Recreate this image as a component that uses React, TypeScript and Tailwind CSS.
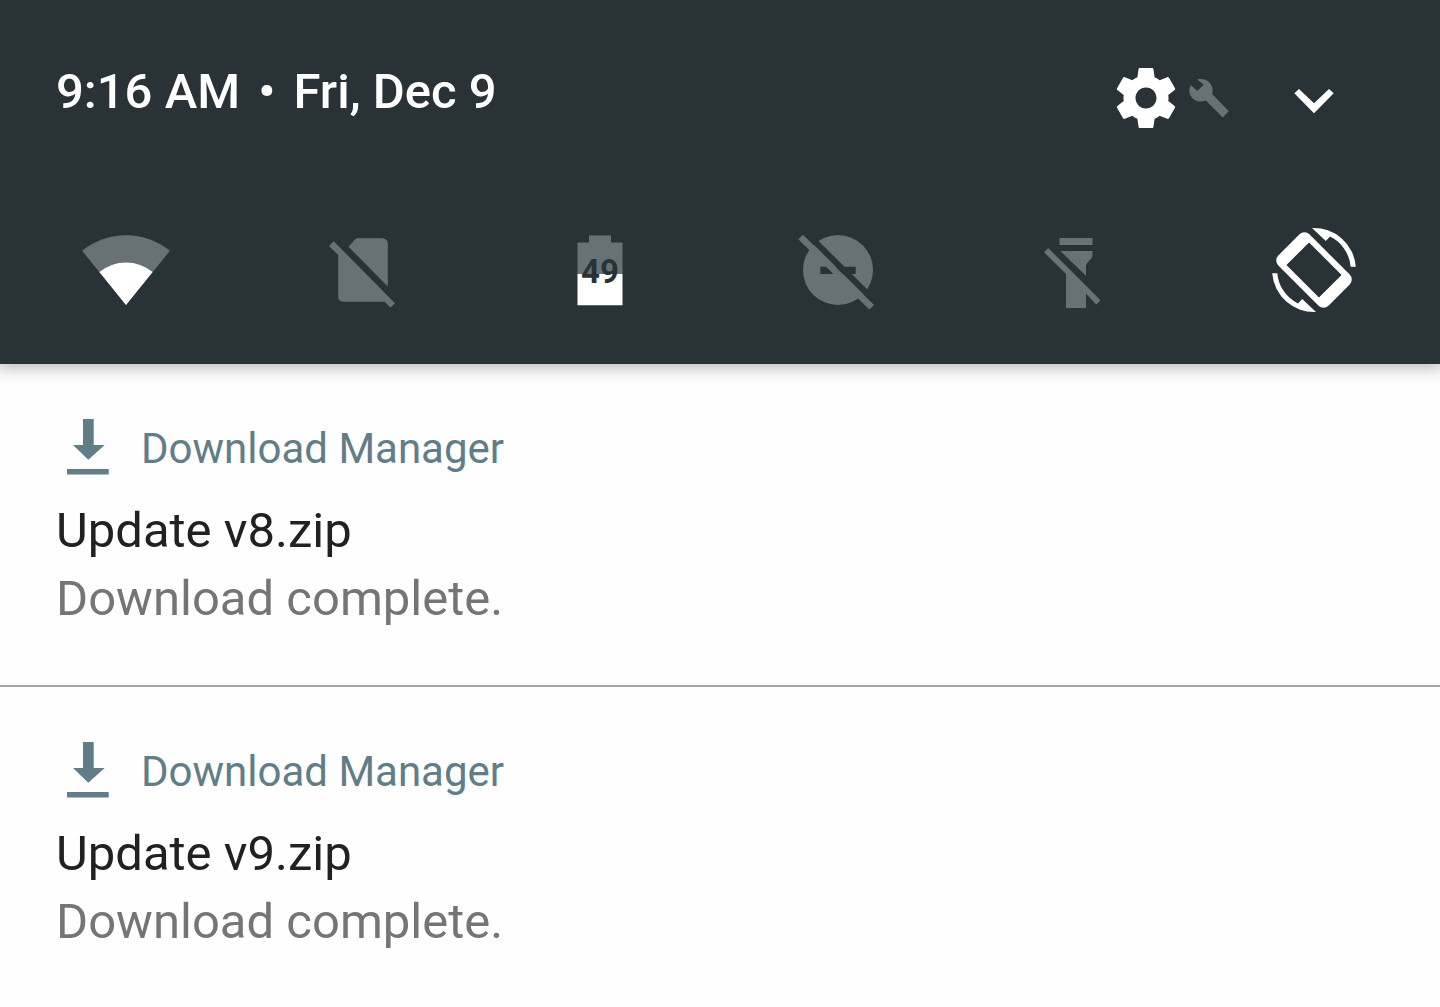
import type { ReactNode } from "react";

// ─── Icons ──────────────────────────────────────────────────────────────────
function SettingsIcon() {
    return (
        <svg viewBox="0 0 24 24" className="size-18 fill-white" aria-hidden="true">
            <path d="M19.43 12.98c.04-.32.07-.64.07-.98s-.03-.66-.07-.98l2.11-1.65c.19-.15.24-.42.12-.64l-2-3.46c-.12-.22-.39-.3-.61-.22l-2.49 1c-.52-.4-1.08-.73-1.69-.98l-.38-2.65C14.46 2.18 14.25 2 14 2h-4c-.25 0-.46.18-.49.42l-.38 2.65c-.61.25-1.17.59-1.69.98l-2.49-1c-.23-.09-.49 0-.61.22l-2 3.46c-.13.22-.07.49.12.64l2.11 1.65c-.04.32-.07.65-.07.98s.03.66.07.98l-2.11 1.65c-.19.15-.24.42-.12.64l2 3.46c.12.22.39.3.61.22l2.49-1c.52.4 1.08.73 1.69.98l.38 2.65c.03.24.24.42.49.42h4c.25 0 .46-.18.49-.42l.38-2.65c.61-.25 1.17-.59 1.69-.98l2.49 1c.23.09.49 0 .61-.22l2-3.46c.12-.22.07-.49-.12-.64l-2.11-1.65zM12 15.5c-1.93 0-3.5-1.57-3.5-3.5s1.57-3.5 3.5-3.5 3.5 1.57 3.5 3.5-1.57 3.5-3.5 3.5z" />
        </svg>
    )
}

function WrenchIcon() {
    return (
        <svg viewBox="0 0 42 42" className="size-[42px] fill-[#687275]" aria-hidden="true">
            <path d="M3.2 8.2 9.2 14 15.6 7.7 9.4 2.4C16.5.4 24.7 5 24.7 13.5c0 1.3-.2 2.4-.6 3.5L40.8 34.2 34.8 40.4 17.8 23.6C9.500 27 1.300 21.200 1.300 13.400c0-2 .9-3.800 1.900-5.200z" />
        </svg>
    )
}

function ChevronIcon() {
    return (
        <svg viewBox="0 0 48 48" className="size-12 fill-white" aria-hidden="true">
            <path d="M4.3 19.3 9 15 24 29.3 39 15 43.7 19.3 24 39.3z" />
        </svg>
    )
}

function WifiIcon() {
    return (
        <svg viewBox="0 0 96 96" className="size-24" aria-hidden="true">
            <path d="M48 83 4 28.7A70 70 0 0 1 92 28.7z" fill="#687275" />
            <path d="M48 83 21.4 50A42 42 0 0 1 74.6 50z" fill="#fff" />
        </svg>
    )
}

function NoSimIcon() {
    return (
        <svg viewBox="0 0 96 96" className="size-24 fill-[#687275]" aria-hidden="true">
            <path d="M33.500 24.700 40 17.600Q41.200 16.300 43 16.300H67.500a5.300 5.300 0 0 1 5.300 5.300V64.500z" />
            <path d="M14 24 18.700 19.300 80 81.200 75.500 85.600 69.500 79.700H28.500a5.300 5.300 0 0 1-5.300-5.300V33z" />
        </svg>
    )
}

function BatteryIcon() {
    return (
        <svg viewBox="0 0 96 96" className="size-24" aria-hidden="true">
            <path d="M36 13.500H58V20.500H69.500V52H24.500V20.500H36z" fill="#687275" />
            <path d="M24.500 52H69.500V83.300H24.500z" fill="#fff" />
            <text
                x="47"
                y="61"
                textAnchor="middle"
                className="fill-[#283237] font-['Liberation_Sans_Narrow','Roboto',sans-serif] text-[33px] font-bold"
            >
                49
            </text>
        </svg>
    )
}

function DoNotDisturbIcon() {
    return (
        <svg viewBox="0 0 96 96" className="size-24" aria-hidden="true">
            <circle cx="47" cy="48" r="35" fill="#687275" />
            <path d="M29.3 44.7H64.7V52H29.3z" fill="#283237" />
            <path d="M12 12 20 11.5 90 81 83 83z" fill="#283237" />
            <path d="M7.3 17.3 12 12.7 83 83 78.3 87.5z" fill="#687275" />
        </svg>
    )
}

function FlashlightIcon() {
    return (
        <svg viewBox="0 0 96 96" className="size-24 fill-[#687275]" aria-hidden="true">
            <path d="M31.500 16H64.500V23H31.500z" />
            <path d="M32.300 29H64.500V33C64.500 38 58 39.500 58 44.500V53.800z" />
            <path d="M16 30.200 20.200 26 72.500 78.200 68.300 82.400 58 71.800V86H38V52z" />
        </svg>
    )
}

function RotateIcon() {
    return (
        <svg viewBox="0 0 96 96" className="size-24 fill-white" aria-hidden="true">
            <path
                fillRule="evenodd"
                transform="rotate(-45 48 48)"
                d="M33 12.500H63A7 7 0 0 1 70 19.500V76.500A7 7 0 0 1 63 83.500H33A7 7 0 0 1 26 76.500V19.500A7 7 0 0 1 33 12.500zM32 25V71H64V25z"
            />
            <path d="M46 6A42 42 0 0 1 89.800 44.700H84.700A37 37 0 0 0 64 14.600L59.800 19z" />
            <path d="M50 90A42 42 0 0 1 6.200 51.300H11.300A37 37 0 0 0 32 81.400L36.200 77z" />
        </svg>
    )
}

function DownloadIcon() {
    return (
        <svg viewBox="0 0 64 64" className="size-16 fill-[#607d88]" aria-hidden="true">
            <path d="M27 4H37.700V30H48.700L32.300 44.700 17 30H27z" />
            <path d="M11 54H52.700V59.500H11z" />
        </svg>
    )
}

// ─── Quick settings ─────────────────────────────────────────────────────────
interface QuickTile {
    label: string
    icon: ReactNode
}

const tiles: QuickTile[] = [
    { label: 'Wi-Fi', icon: <WifiIcon /> },
    { label: 'No SIM card', icon: <NoSimIcon /> },
    { label: 'Battery', icon: <BatteryIcon /> },
    { label: 'Do not disturb', icon: <DoNotDisturbIcon /> },
    { label: 'Flashlight', icon: <FlashlightIcon /> },
    { label: 'Auto-rotate', icon: <RotateIcon /> },
]

function QuickSettings() {
    return (
        <header className="relative bg-[#283237] pt-[62px] pb-[46px] shadow-[0_0_16px_3px_rgba(0,0,0,0.3)]">
            <div className="flex items-center pr-[102px] pl-14">
                <p className="flex-1 self-start text-[49px] leading-[60px] font-medium text-white">
                    9:16 AM <span className="mx-[6px]">•</span> Fri, Dec 9
                </p>
                <div className="flex items-center gap-[6px]">
                    <button type="button" aria-label="Settings">
                        <SettingsIcon />
                    </button>
                    <WrenchIcon />
                </div>
                <button type="button" aria-label="Expand" className="ml-[60px]">
                    <ChevronIcon />
                </button>
            </div>
            <div className="mt-[88px] grid grid-cols-6 justify-items-center px-[7px]">
                {tiles.map((tile) => (
                    <button key={tile.label} type="button" aria-label={tile.label}>
                        {tile.icon}
                    </button>
                ))}
            </div>
        </header>
    )
}

// ─── Notifications ──────────────────────────────────────────────────────────
interface NotificationProps {
    app: string
    title: string
    message: string
}

function Notification({ app, title, message }: NotificationProps) {
    return (
        <li className="px-14 pt-[51px] pb-[52px]">
            <div className="mb-[18px] flex items-center gap-[21px]">
                <DownloadIcon />
                <span className="pt-1 text-[42px] leading-[50px] text-[#607d88]">{app}</span>
            </div>
            <h2 className="text-[49px] leading-[68px] text-[#212121]">{title}</h2>
            <p className="text-[49px] leading-[68px] text-[#757575]">{message}</p>
        </li>
    )
}

const notifications: NotificationProps[] = [
    { app: 'Download Manager', title: 'Update v8.zip', message: 'Download complete.' },
    { app: 'Download Manager', title: 'Update v9.zip', message: 'Download complete.' },
]

export default function App() {
    return (
        <div className="min-h-screen overflow-x-hidden bg-[#fefefe] font-['Roboto',sans-serif]">
            <QuickSettings />
            <ul className="divide-y-2 divide-[#a3a5a6]">
                {notifications.map((item) => (
                    <Notification key={item.title} {...item} />
                ))}
            </ul>
        </div>
    )
}
